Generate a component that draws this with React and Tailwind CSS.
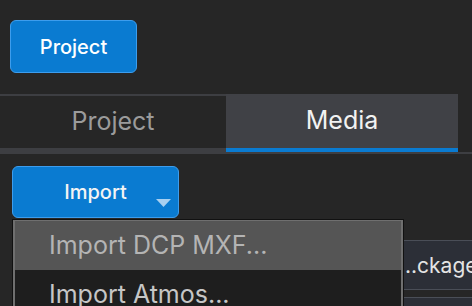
const menuItems = [
  { label: "Import DCP MXF...", active: true },
  { label: "Import Atmos...", active: false },
];

function App() {
  return (
    <div
      className="relative h-[306px] w-[472px] overflow-hidden bg-[#262626]"
      style={{ fontFamily: "Inter, 'Noto Sans', sans-serif" }}
    >
      <div className="pl-[10px] pt-[20px]">
        <button className="flex h-[53px] w-[127px] items-center justify-center rounded-[6px] border border-[#3d9ded] bg-[#0a7bd1] text-[20px] font-medium text-white">
          Project
        </button>
      </div>

      <div className="mt-[21px] flex w-full border-b-2 border-[#3d3e42]">
        <div className="flex w-[226px] flex-col">
          <div className="flex h-[54px] items-center justify-center border-t-2 border-[#3d3e42] text-[25px] text-[#9b9b9b]">
            Project
          </div>
          <div className="h-[4px] bg-[#3d3e42]" />
        </div>
        <div className="flex w-[232px] flex-col bg-[#404146]">
          <div className="flex h-[54px] items-center justify-center text-[25px] text-[#f2f2f2]">
            Media
          </div>
          <div className="h-[4px] bg-[#0a7bd1]" />
        </div>
      </div>

      <div className="pl-[12px] pt-[12px]">
        <button className="relative flex h-[52px] w-[167px] items-center justify-center rounded-[6px] border border-[#3d9ded] bg-[#0a7bd1] text-[20px] font-medium text-[#f4f4f4]">
          Import
          <svg
            className="absolute bottom-[10px] right-[7px]"
            width="15"
            height="8"
            viewBox="0 0 15 8"
          >
            <path d="M0 0 H15 L7.5 8 Z" fill="#a9d0f0" />
          </svg>
        </button>
      </div>

      <div className="ml-[12px] mt-[22px] h-[50px] overflow-hidden whitespace-nowrap border-y border-[#4a4e57] bg-[#2c2f37] pl-[393px] text-[21px] leading-[50px] text-[#e4e4e4]">
        ..ckage
      </div>
      <div className="ml-[12px] mt-[7px] h-[10px] border-t border-[#4a4e57] bg-[#2c2f37]" />

      <div className="absolute left-[12px] top-[219px] w-[392px] border border-[#111111]">
        <div className="border-l-2 border-r-2 border-t border-[#6f6f6f]">
          {menuItems.map((item) => (
            <div
              key={item.label}
              className={`flex h-[49px] items-center pl-[34px] text-[25px] ${
                item.active
                  ? "bg-[#555555] text-[#b4b4b4]"
                  : "bg-[#1e1e1e] text-[#c6c6c6]"
              }`}
            >
              {item.label}
            </div>
          ))}
        </div>
      </div>
    </div>
  );
}

export default App;
